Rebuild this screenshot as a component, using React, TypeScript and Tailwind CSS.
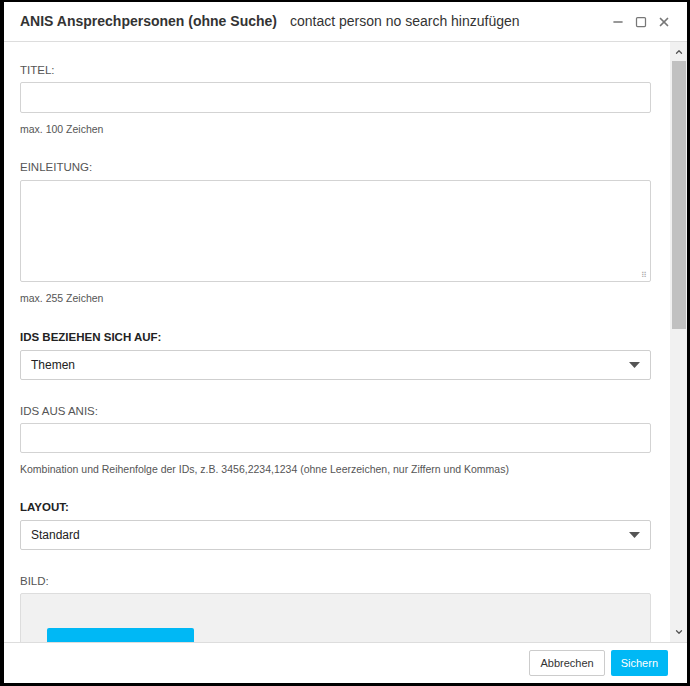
import React from 'react';
import { Minus, Square, X, ChevronUp, ChevronDown } from 'lucide-react';

const Label = ({ children, bold }: { children: React.ReactNode; bold?: boolean }) => (
  <div className={`text-[11.5px] leading-[14px] ${bold ? 'font-bold text-[#222]' : 'text-[#555]'}`}>{children}</div>
);

const Hint = ({ children }: { children: React.ReactNode }) => (
  <div className="text-[10.5px] leading-[13px] text-[#555]">{children}</div>
);

const Select = ({ value }: { value: string }) => (
  <div className="h-[30px] border border-[#cfcfcf] rounded-[2px] flex items-center justify-between px-[10px] text-[12px] text-[#222]">
    <span>{value}</span>
    <svg width="11" height="6" viewBox="0 0 11 6"><path d="M0 0h11L5.5 6z" fill="#555" /></svg>
  </div>
);

export default function App() {
  return (
    <div className="w-[690px] h-[686px] bg-black pl-[4px] pr-[3px] pt-[2px] pb-[3px]" style={{ fontFamily: '"Liberation Sans", Arial, sans-serif' }}>
      <div className="w-full h-full bg-white flex flex-col">
        <div className="h-[40px] flex items-center px-[16px] border-b border-[#ddd] shrink-0">
          <span className="text-[14px] font-bold text-[#333]">ANIS Ansprechpersonen (ohne Suche)</span>
          <span className="text-[14px] text-[#333] ml-[13px]">contact person no search hinzufügen</span>
          <div className="ml-auto flex items-center gap-[10px] text-[#777]">
            <Minus size={14} strokeWidth={2.5} />
            <Square size={12} strokeWidth={2.5} />
            <X size={14} strokeWidth={3} />
          </div>
        </div>
        <div className="flex-1 flex min-h-0">
          <div className="flex-1 overflow-hidden pl-[16px] pr-[19px] pt-[21px]">
            <Label>TITEL:</Label>
            <div className="h-[31px] border border-[#d3d3d3] rounded-[2px] mt-[5px]" />
            <div className="mt-[10px]"><Hint>max. 100 Zeichen</Hint></div>
            <div className="mt-[24px]"><Label>EINLEITUNG:</Label></div>
            <div className="h-[102px] border border-[#d3d3d3] rounded-[2px] mt-[6px] relative">
              <span className="absolute right-[3px] bottom-[1px] text-[8px] leading-none text-[#aaa]">⠿</span>
            </div>
            <div className="mt-[10px]"><Hint>max. 255 Zeichen</Hint></div>
            <div className="mt-[25px] mb-[6px]"><Label bold>IDS BEZIEHEN SICH AUF:</Label></div>
            <Select value="Themen" />
            <div className="mt-[24px] mb-[5px]"><Label>IDS AUS ANIS:</Label></div>
            <div className="h-[30px] border border-[#d3d3d3] rounded-[2px]" />
            <div className="mt-[10px]"><Hint>Kombination und Reihenfolge der IDs, z.B. 3456,2234,1234 (ohne Leerzeichen, nur Ziffern und Kommas)</Hint></div>
            <div className="mt-[24px] mb-[6px]"><Label bold>LAYOUT:</Label></div>
            <Select value="Standard" />
            <div className="mt-[24px] mb-[5px]"><Label>BILD:</Label></div>
            <div className="h-[120px] bg-[#f1f1f1] border border-[#ddd] rounded-[2px] pl-[26px] pt-[34px]">
              <div className="w-[147px] h-[30px] bg-[#00b8f5] rounded-[2px]" />
            </div>
          </div>
          <div className="w-[17px] bg-[#f1f1f1] flex flex-col items-center">
            <ChevronUp size={10} className="text-[#555] mt-[5px]" strokeWidth={3} />
            <div className="w-[14px] h-[268px] bg-[#c1c1c1] mt-[4px]" />
            <div className="flex-1" />
            <ChevronDown size={10} className="text-[#555] mb-[5px]" strokeWidth={3} />
          </div>
        </div>
        <div className="h-[41px] border-t border-[#ddd] flex items-center justify-end gap-[6px] pr-[19px] shrink-0">
          <button className="h-[26px] px-[10px] border border-[#ccc] rounded-[2px] text-[11px] text-[#333] bg-white">Abbrechen</button>
          <button className="h-[26px] px-[10px] rounded-[2px] text-[11px] text-white bg-[#00b8f5]">Sichern</button>
        </div>
      </div>
    </div>
  );
}
